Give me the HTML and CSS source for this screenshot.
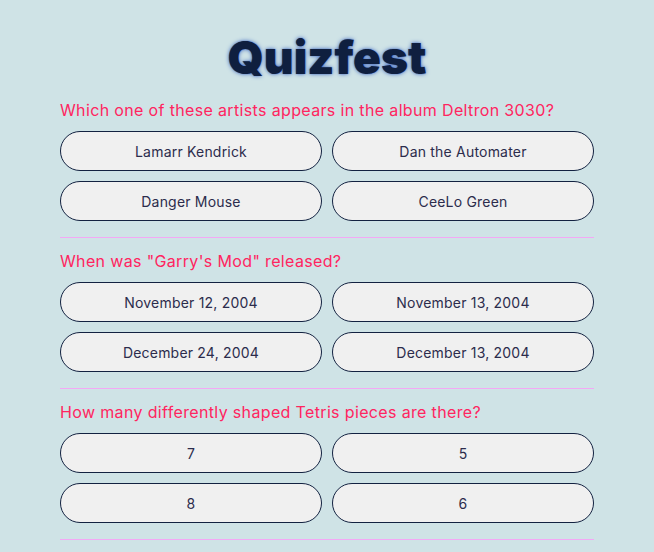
FILE: index.html
```html
<!DOCTYPE html>
<html>
<head>
<meta charset="utf-8">
<link rel="stylesheet" href="styles.css">
</head>
<body>
<main class="quiz">
  <h1 class="title">Quizfest</h1>
  <section class="question">
    <p class="prompt">Which one of these artists appears in the album Deltron 3030?</p>
    <div class="answers">
      <button class="answer">Lamarr Kendrick</button>
      <button class="answer">Dan the Automater</button>
      <button class="answer">Danger Mouse</button>
      <button class="answer">CeeLo Green</button>
    </div>
  </section>
  <section class="question">
    <p class="prompt">When was "Garry's Mod" released?</p>
    <div class="answers">
      <button class="answer">November 12, 2004</button>
      <button class="answer">November 13, 2004</button>
      <button class="answer">December 24, 2004</button>
      <button class="answer">December 13, 2004</button>
    </div>
  </section>
  <section class="question">
    <p class="prompt">How many differently shaped Tetris pieces are there?</p>
    <div class="answers">
      <button class="answer">7</button>
      <button class="answer">5</button>
      <button class="answer">8</button>
      <button class="answer">6</button>
    </div>
  </section>
</main>
</body>
</html>
```

FILE: styles.css
```css
html, body {
  margin: 0;
  padding: 0;
  background: #cfe3e6;
}
body {
  font-family: "Inter", "Liberation Sans", sans-serif;
}
.quiz {
  width: 534px;
  margin: 0 auto;
  padding-top: 27px;
}
.title {
  margin: 0 0 13px;
  text-align: center;
  font-family: "Inter", sans-serif;
  font-weight: 900;
  font-size: 46px;
  line-height: 60px;
  color: #0f1f3f;
  text-shadow: 0 0 4px #4068c0, 0 0 1px #4a73c8;
}
.question {
  padding-bottom: 16px;
  border-bottom: 1px solid #f3a8f5;
  margin-bottom: 13px;
}
.prompt {
  margin: 0 0 11px;
  font-size: 16px;
  line-height: 20px;
  letter-spacing: 0.35px;
  color: #ff2560;
}
.answers {
  display: grid;
  grid-template-columns: 1fr 1fr;
  gap: 10px;
}
.answer {
  height: 40px;
  border: 1px solid #132241;
  border-radius: 20px;
  background: #f0f0f0;
  font-family: inherit;
  font-size: 14px;
  letter-spacing: 0.2px;
  color: #2c2c4c;
  padding: 0;
}
```
